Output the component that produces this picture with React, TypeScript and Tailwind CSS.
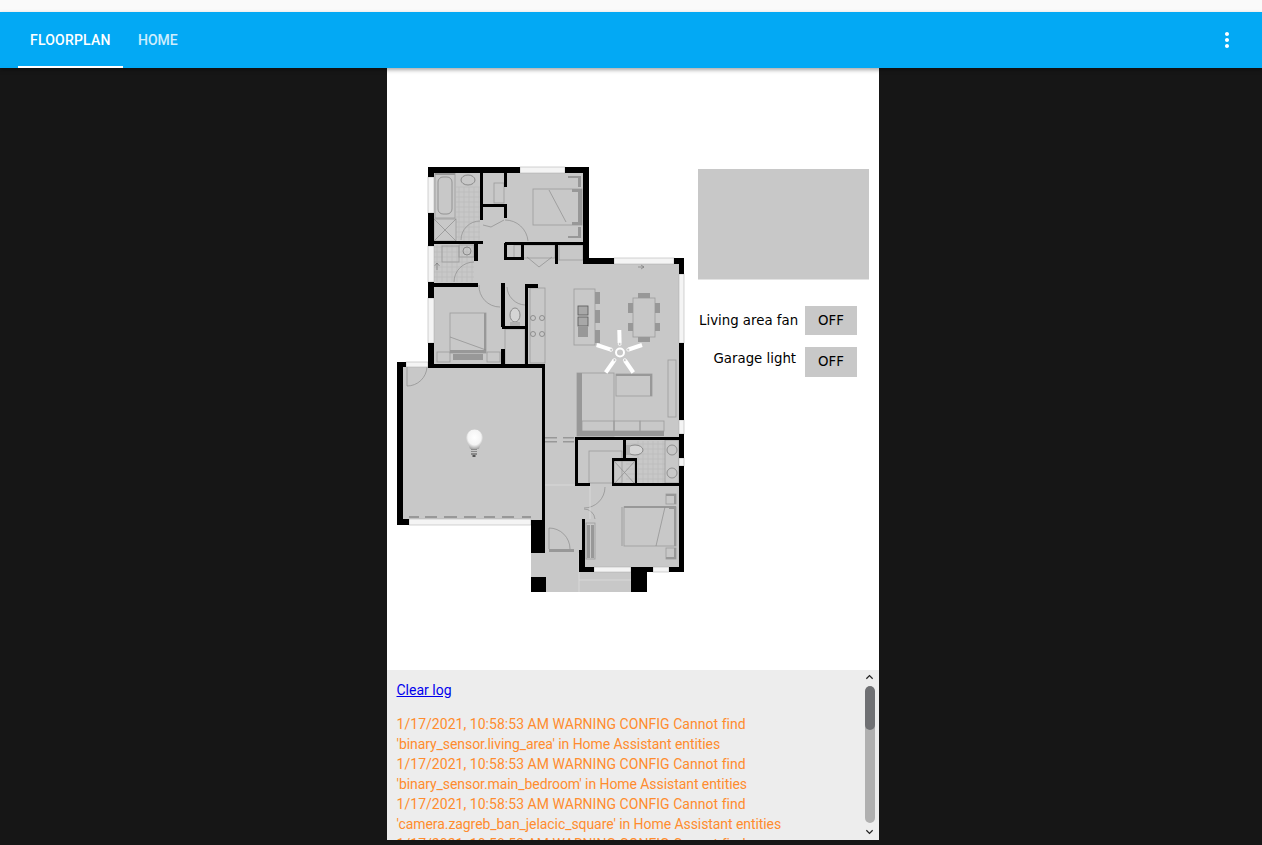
import { MdMoreVert } from "react-icons/md";

type Box = [number, number, number, number];

const LOG_LINES = [
  "1/17/2021, 10:58:53 AM WARNING CONFIG Cannot find",
  "'binary_sensor.living_area' in Home Assistant entities",
  "1/17/2021, 10:58:53 AM WARNING CONFIG Cannot find",
  "'binary_sensor.main_bedroom' in Home Assistant entities",
  "1/17/2021, 10:58:53 AM WARNING CONFIG Cannot find",
  "'camera.zagreb_ban_jelacic_square' in Home Assistant entities",
  "1/17/2021, 10:58:53 AM WARNING CONFIG Cannot find",
];

// all floorplan numbers are page coordinates (viewBox starts at the card corner)
const WINDOWS: Box[] = [
  [520, 167, 45, 6], [614, 258, 60, 6], [679, 274, 5, 69], [679, 420, 5, 14], [679, 458, 5, 8],
  [428, 177, 6, 36], [428, 246, 6, 36], [428, 298, 6, 45], [406, 362, 22, 5], [409, 519, 122, 6],
  [594, 567, 37, 5], [653, 567, 16, 5],
];

const WALLS: Box[] = [
  // outer walls
  [428, 167, 92, 6], [565, 167, 24, 6], [583, 167, 6, 97], [583, 258, 31, 6], [674, 258, 10, 6],
  [679, 258, 5, 16], [679, 343, 5, 77], [679, 434, 5, 24], [679, 466, 5, 106],
  [428, 167, 6, 10], [428, 213, 6, 33], [428, 282, 6, 16], [428, 343, 6, 24],
  [397, 362, 6, 163], [397, 362, 9, 5], [428, 364, 117, 4], [542, 364, 3, 156], [397, 519, 12, 6],
  [531, 520, 14, 33], [531, 577, 15, 15], [631, 567, 16, 25], [647, 567, 6, 5], [669, 567, 15, 5],
  [579, 567, 15, 5], [579, 550, 6, 22], [582, 519, 3, 40],
  // upper bedroom, bath and closets
  [480, 173, 3, 47], [504, 173, 3, 14], [504, 204, 3, 14], [483, 204, 21, 3],
  [434, 241, 49, 3], [474, 241, 4, 20], [434, 283, 44, 4],
  [505, 242, 84, 3], [504, 243, 3, 17], [521, 243, 3, 17], [504, 257, 20, 3], [555, 245, 3, 19],
  // hall, wc and kitchen
  [501, 283, 4, 44], [502, 326, 25, 3], [501, 349, 4, 16], [525, 284, 3, 81], [525, 284, 13, 4],
  // lower wet rooms
  [575, 437, 109, 3], [575, 437, 3, 49], [575, 483, 15, 3], [612, 483, 67, 3], [623, 438, 3, 22],
  [612, 458, 25, 3], [612, 458, 2, 28], [635, 461, 2, 25],
];

const DARK: Box[] = [
  [577, 373, 5, 63], [577, 431, 87, 5], [616, 374, 36, 2], [650, 374, 2, 22],
  [595, 292, 5, 12], [595, 310, 5, 13], [595, 330, 5, 13],
  [638, 293, 12, 5], [638, 337, 12, 5], [628, 303, 5, 10], [628, 323, 5, 8], [655, 303, 5, 10], [655, 323, 5, 8],
  [578, 327, 10, 10], [624, 506, 52, 2], [587, 525, 3, 33], [591, 525, 3, 33],
  [572, 189, 10, 3], [572, 222, 10, 3], [578, 189, 4, 36],
  [450, 350, 36, 3], [453, 354, 30, 6], [484, 313, 2, 40], [568, 176, 13, 2], [578, 176, 3, 11], [568, 236, 13, 2], [578, 227, 3, 11],
  [666, 494, 10, 2], [674, 494, 2, 10], [666, 557, 10, 2], [674, 548, 2, 11], [669, 507, 7, 2], [674, 507, 2, 39],
  [549, 549, 25, 3],
  [409, 516, 10, 2], [425, 516, 12, 2], [444, 516, 13, 2], [464, 516, 12, 2], [484, 516, 11, 2], [502, 516, 12, 2], [522, 516, 9, 2],
  [545, 437, 12, 1.5], [545, 441, 12, 1.5], [563, 437, 11, 1.5], [563, 441, 11, 1.5], [637, 483, 10, 3], [655, 483, 10, 3], [435, 173, 20, 2],
];

const OUTLINES: Box[] = [
  [435, 173, 20, 45], [434, 219, 22, 22], [614, 461, 21, 23], [442, 246, 17, 16], [459, 245, 15, 12],
  [533, 189, 49, 36], [450, 313, 36, 40], [437, 352, 13, 10], [487, 352, 13, 10],
  [530, 288, 15, 75], [574, 289, 21, 56], [633, 298, 22, 39], [668, 360, 8, 57],
  [577, 373, 37, 63], [582, 421, 32, 10], [614, 421, 26, 10], [640, 421, 24, 10], [616, 374, 36, 22],
  [624, 507, 52, 39], [666, 494, 10, 10], [666, 548, 10, 11], [586, 523, 9, 36], [589, 451, 33, 32],
  [665, 440, 14, 43], [514, 245, 41, 13], [559, 245, 24, 15], [494, 183, 10, 20], [505, 329, 20, 36],
];

const ARCS = [
  "M461 240A19 19 0 0 1 480 221",
  "M505 220A23 23 0 0 1 528 241",
  "M454 282A20 20 0 0 1 474 262",
  "M479 285A21 21 0 0 0 500 307",
  "M507 287A19 19 0 0 0 525 305",
  "M407 386A20 20 0 0 0 427 367",
  "M584 508A21 21 0 0 0 605 487",
  "M584 509A11 11 0 0 1 595 519",
  "M549 528A21 21 0 0 1 570 549",
  "M483 225L491 227L504 220",
  "M527 257L539 267L552 257",
  "M407 367V386",
  "M549 528V549",
  "M434 219L456 241M456 219L434 241",
  "M614 461L635 484M635 461L614 484",
  "M622 507V546M665 507L656 546",
  "M549 190L566 222",
  "M450 337L486 350",
];

// [blade start x, y, tip x, y, joint x, y]
const FAN_BLADES = [
  [619.6, 343, 619.3, 330, 619.7, 344],
  [628.6, 349.5, 642, 345, 628.2, 349.7],
  [625, 360.5, 633.3, 372.5, 624.8, 360.1],
  [614.4, 360.2, 605.7, 372.5, 614.5, 360],
  [611.6, 349.9, 596.7, 345, 611.2, 349.8],
];

function Rects({ items, className }: { items: Box[]; className: string }) {
  return (
    <g className={className}>
      {items.map(([x, y, w, h], i) => (
        <rect key={i} x={x} y={y} width={w} height={h} />
      ))}
    </g>
  );
}

function Tiles() {
  const lines: string[] = [];
  for (let x = 459; x < 480; x += 5) lines.push(`M${x} 187V241`);
  for (let y = 187; y < 241; y += 5) lines.push(`M456 ${y}H480`);
  for (let x = 437; x < 474; x += 5) lines.push(`M${x} 245V282`);
  for (let y = 247; y < 282; y += 5) lines.push(`M434 ${y}H474`);
  for (let x = 638; x < 665; x += 5) lines.push(`M${x} 441V483`);
  for (let y = 444; y < 483; y += 5) lines.push(`M626 ${y}H665`);
  return <path d={lines.join("")} className="stroke-[#b4b4b4] [stroke-width:0.5] fill-none" />;
}

function Floorplan() {
  return (
    <svg viewBox="387 68 492 602" className="block w-[492px] h-[602px] shrink-0">
      <defs>
        <radialGradient id="bulbGlass" cx="50%" cy="40%" r="60%">
          <stop offset="0%" stopColor="#ffffff" />
          <stop offset="65%" stopColor="#f4f4f4" />
          <stop offset="100%" stopColor="#a8a8a8" />
        </radialGradient>
      </defs>

      <g className="blur-[0.35px]">
        <path d="M428 167H589V258H684V572H647V592H531V525H397V362H428Z" fill="#c8c8c8" />
        <Tiles />
        <Rects items={OUTLINES} className="fill-none stroke-[#9c9c9c] [stroke-width:0.8]" />
        <Rects items={DARK} className="fill-[#989898]" />
        <path d={ARCS.join("")} className="fill-none stroke-[#8c8c8c] [stroke-width:0.7]" />

        {/* bath, kitchen and wc fixtures */}
        <rect x="438" y="177" width="14" height="37" rx="5" className="fill-none stroke-[#858585]" strokeWidth={0.8} />
        <ellipse cx="468" cy="180" rx="7" ry="5" className="fill-none stroke-[#7a7a7a]" strokeWidth={0.8} />
        <ellipse cx="467" cy="251" rx="4" ry="4" className="fill-none stroke-[#7a7a7a]" strokeWidth={0.8} />
        <ellipse cx="515" cy="315" rx="5" ry="7" className="fill-[#d5d5d5] stroke-[#777777]" strokeWidth={0.8} />
        <rect x="510" y="322" width="10" height="4" className="fill-[#b0b0b0]" />
        <ellipse cx="635" cy="450" rx="8" ry="5" className="fill-[#d5d5d5] stroke-[#777777]" strokeWidth={0.8} />
        <rect x="626" y="445" width="4" height="10" className="fill-[#b0b0b0]" />
        <rect x="578" y="306" width="10" height="9" className="fill-[#a8a8a8] stroke-[#555555]" strokeWidth={0.8} />
        <rect x="578" y="317" width="10" height="9" className="fill-[#a8a8a8] stroke-[#555555]" strokeWidth={0.8} />
        {[[533, 318], [542, 318], [533, 334], [542, 334], [672, 450], [672, 473]].map(([cx, cy], i) => (
          <circle key={i} cx={cx} cy={cy} r={i > 3 ? 5 : 2.5} className="fill-none stroke-[#808080]" strokeWidth={0.8} />
        ))}
        <path d="M545 485H590M590 486V519M579 553V592M579 580H631" className="fill-none stroke-[#dcdcdc]" strokeWidth={0.8} />
        <path d="M437 263V270M434.500 266L437 263L439.500 266M638 267H644M641 265L644 267L641 269" className="fill-none stroke-[#6e6e6e]" strokeWidth={0.6} />

        <Rects items={WINDOWS} className="fill-[#f4f4f4] stroke-[#a8a8a8] [stroke-width:0.5]" />
        <Rects items={WALLS} className="fill-black" />
      </g>

      {/* ceiling fan */}
      <g>
        {FAN_BLADES.map(([x1, y1, x2, y2], i) => (
          <line key={i} x1={x1} y1={y1} x2={x2} y2={y2} stroke="#ffffff" strokeWidth={4} />
        ))}
        {FAN_BLADES.map(([, , , , cx, cy], i) => (
          <circle key={i} cx={cx} cy={cy} r={1.5} fill="#c8c8c8" stroke="#ffffff" strokeWidth={0.8} />
        ))}
        <circle cx="620" cy="352.500" r="4" fill="#c8c8c8" stroke="#ffffff" strokeWidth={2} />
      </g>

      {/* garage light */}
      <path d="M466 438a8.500 8.500 0 0 1 17 0c0 4-3 6-4 11h-9c-1-5-4-7-4-11Z" fill="url(#bulbGlass)" />
      <rect x="471" y="449" width="6" height="6" fill="#8a8a8a" />
      <path d="M471 450.500h6M471 452.500h6" stroke="#d8d8d8" strokeWidth={0.8} />
      <rect x="472.500" y="455" width="3" height="2" fill="#555555" />

      {/* camera placeholder */}
      <rect x="698" y="169" width="171" height="110.500" fill="#c8c8c8" />

      <g className="font-['DejaVu_Sans',sans-serif] text-[13.33px] fill-black">
        <text x="699" y="325">Living area fan</text>
        <text x="713.500" y="363">Garage light</text>
      </g>

      <rect x="805" y="306" width="52" height="29" fill="#c8c8c8" />
      <rect x="805" y="347" width="52" height="30" fill="#c8c8c8" />
      <g className="font-['DejaVu_Sans',sans-serif] text-[13.33px] fill-black">
        <text x="818" y="325">OFF</text>
        <text x="818" y="366">OFF</text>
      </g>
    </svg>
  );
}

function LogScrollbar() {
  return (
    <div className="w-[17px] shrink-0 flex flex-col items-center pt-[4px] pr-[2px]">
      <svg viewBox="0 0 10 6" className="w-[9px] h-[6px] shrink-0">
        <path d="M1.500 5L5 1.500L8.500 5" fill="none" stroke="#222222" strokeWidth={1.4} />
      </svg>
      <div className="mt-[6px] w-[10px] h-[137px] rounded-full bg-[#b0b0b0] overflow-hidden shrink-0">
        <div className="h-[44px] rounded-full bg-[#6f7073]" />
      </div>
      <svg viewBox="0 0 10 6" className="mt-[6px] w-[9px] h-[6px] shrink-0">
        <path d="M1.500 1L5 4.500L8.500 1" fill="none" stroke="#222222" strokeWidth={1.4} />
      </svg>
    </div>
  );
}

function LogPanel() {
  return (
    <div className="h-[170px] shrink-0 bg-[#ededed] flex overflow-hidden">
      <div className="flex-1 pl-[9.5px] pt-[10px] text-sm leading-5 overflow-hidden">
        <a href="#" className="text-[#0000ee] underline">Clear log</a>
        <div className="mt-[14px] text-[#ff8c2e]">
          {LOG_LINES.map((line, i) => (
            <div key={i} className={i % 2 === 1 ? "whitespace-nowrap tracking-[-0.07px]" : "whitespace-nowrap tracking-[0.04px]"}>
              {line}
            </div>
          ))}
        </div>
      </div>
      <LogScrollbar />
    </div>
  );
}

export default function App() {
  return (
    <div className="h-[845px] bg-[#161616] overflow-hidden font-['Roboto',sans-serif]">
      <div className="h-3 bg-[#fafafa]" />

      <header className="relative z-10 h-14 bg-[#03a9f4] flex items-stretch pl-[18px] pr-[23px] shadow-[0_2px_4px_rgba(0,0,0,0.35)]">
        <div className="w-[105px] pl-3 border-b-2 border-white flex items-center text-sm font-medium tracking-[0.2px] text-white pt-[2px]">
          FLOORPLAN
        </div>
        <div className="ml-[15px] flex items-center text-sm font-medium text-white/80">HOME</div>
        <div className="ml-auto flex items-center">
          <MdMoreVert size={24} className="text-white" />
        </div>
      </header>

      <main className="flex justify-center pl-1">
        <div className="w-[492px] h-[772px] bg-white flex flex-col">
          <Floorplan />
          <LogPanel />
        </div>
      </main>
    </div>
  );
}
